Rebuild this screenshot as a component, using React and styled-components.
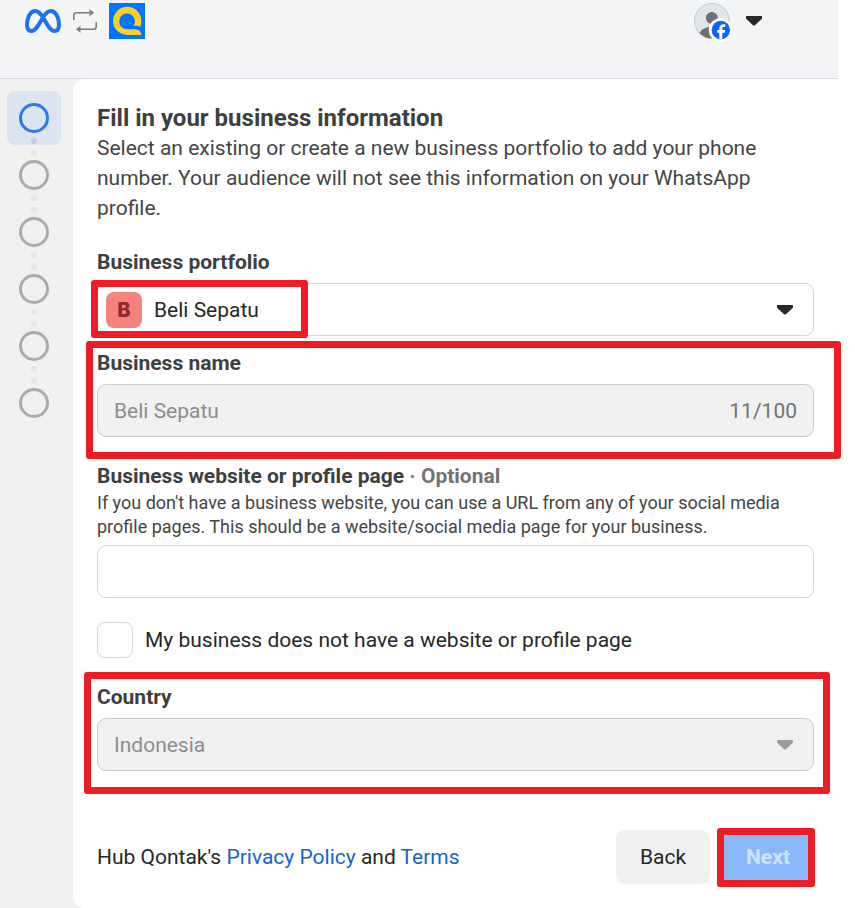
import React, { useState } from 'react';
import styled, { createGlobalStyle } from 'styled-components';

const GlobalStyle = createGlobalStyle`
  * {
    box-sizing: border-box;
  }

  body {
    margin: 0;
    background-color: #fff;
    color: #262728;
    font-family: Roboto, "Liberation Sans", sans-serif;
    font-size: 21px;
    line-height: 30px;
  }
`;

const Page = styled.div`
  display: flex;
  flex-direction: column;
  min-height: 100vh;
  padding-right: 17px;
`;

const Header = styled.header`
  display: flex;
  justify-content: space-between;
  align-items: flex-start;
  height: 79px;
  padding: 3px 76px 0 25px;
  background-color: #f4f5f7;
  border-bottom: 1px solid #d8dadf;
`;

const Brands = styled.div`
  display: flex;
  align-items: center;
  gap: 12px;

  svg {
    display: block;
  }
`;

const AccountButton = styled.button`
  display: flex;
  align-items: center;
  gap: 16px;
  padding: 0;
  border: none;
  background: none;
  cursor: pointer;

  svg {
    display: block;
    overflow: visible;
  }
`;

const Body = styled.div`
  display: flex;
  flex: 1;
  background-color: #f1f1f1;
`;

const Steps = styled.ol`
  width: 73px;
  margin: 0;
  padding: 24px 19px;
  list-style: none;
  isolation: isolate;
`;

const Step = styled.li`
  position: relative;
  display: flex;
  flex-direction: column;
  align-items: center;
  gap: 6px;
  height: ${({ $last }) => ($last ? '30px' : '57px')};
  width: 30px;

  &::before {
    content: "";
    display: ${({ $active }) => ($active ? 'block' : 'none')};
    position: absolute;
    z-index: -1;
    top: -12px;
    left: -12px;
    width: 54px;
    height: 54px;
    border-radius: 8px;
    background-color: #dbe4f0;
  }
`;

const Circle = styled.span`
  width: 30px;
  height: 30px;
  margin-bottom: -1px;
  border: 3px solid ${({ $active }) => ($active ? '#2d78ea' : '#a9adb3')};
  border-radius: 50%;
`;

const Dot = styled.span`
  width: 6px;
  height: 6px;
  border-radius: 50%;
  background-color: ${({ $active }) => ($active ? '#c3cbd6' : '#e5e5e5')};
`;

const Panel = styled.main`
  flex: 1;
  min-width: 0;
  padding: 24px;
  border-radius: 12px 0 0 12px;
  background-color: #fff;
`;

const Title = styled.h1`
  margin: 0;
  color: #3e3f40;
  font-size: 24px;
  font-weight: 700;
  line-height: 30px;
`;

const Intro = styled.p`
  margin: 0 0 24px;
  color: #444546;
`;

const Field = styled.div`
  position: relative;
  margin-bottom: ${({ $tight }) => ($tight ? '12px' : '24px')};
`;

const Label = styled.label`
  display: block;
  color: #3e3f40;
  font-weight: 700;
`;

const Optional = styled.span`
  color: #737373;
`;

const Help = styled.p`
  margin: 0;
  color: #444546;
  font-size: 18px;
  line-height: 24px;
`;

const Control = styled.div`
  position: relative;
  margin-top: 6px;
`;

const TextInput = styled.input`
  display: block;
  width: 100%;
  height: 53px;
  margin: 0;
  padding: 0 16px;
  border: 1px solid #d6d6d6;
  border-radius: 9px;
  background-color: #fff;
  color: #262728;
  font: inherit;
  opacity: 1;

  &:disabled {
    border-color: #cacaca;
    background-color: #f1f1f1;
    color: #8d8d8d;
  }
`;

const SelectInput = styled(TextInput)`
  appearance: none;
  padding-left: ${({ $withAvatar }) => ($withAvatar ? '56px' : '16px')};
`;

const Avatar = styled.span`
  position: absolute;
  top: 9px;
  left: 9px;
  width: 36px;
  height: 36px;
  border-radius: 8px;
  background-color: #f5827d;
  color: #8c2a34;
  font-family: Inter, Roboto, sans-serif;
  font-size: 20px;
  font-weight: 800;
  line-height: 36px;
  text-align: center;
  pointer-events: none;
`;

const Counter = styled.span`
  position: absolute;
  top: 12px;
  right: 17px;
  color: #737373;
`;

const CaretSlot = styled.span`
  position: absolute;
  top: 22px;
  right: 21px;
  pointer-events: none;

  svg {
    display: block;
  }
`;

const CheckRow = styled.div`
  display: flex;
  align-items: center;
  gap: 12px;
  margin-bottom: 24px;
`;

const Checkbox = styled.input`
  appearance: none;
  width: 36px;
  height: 36px;
  margin: 0;
  border: 1px solid #d6d6d6;
  border-radius: 8px;
  background-color: #fff;

  &:checked {
    background-color: #2d78ea;
  }
`;

const Footer = styled.footer`
  display: flex;
  justify-content: space-between;
  align-items: center;
  margin-top: 59px;
`;

const Link = styled.a`
  color: #1763cf;
  text-decoration: none;
`;

const Actions = styled.div`
  display: flex;
  gap: 12px;
`;

const ButtonWrap = styled.div`
  position: relative;
`;

const Button = styled.button`
  height: 54px;
  padding: 0 24px;
  border: none;
  border-radius: 9px;
  background-color: ${({ $primary }) => ($primary ? '#8ab9f9' : '#f1f1f1')};
  color: ${({ $primary }) => ($primary ? '#d0e3fd' : '#262728')};
  font: inherit;
  font-weight: ${({ $primary }) => ($primary ? 700 : 400)};
`;

// red annotation frame laid over a field or button
const Highlight = styled.span`
  position: absolute;
  z-index: 1;
  inset: ${({ $inset }) => $inset};
  border: 7px solid #ee1c25;
  border-radius: 3px;
  pointer-events: none;
`;

function Caret({ color = '#262728' }) {
  return (
    <svg width="16" height="10" viewBox="0 0 16 10" aria-hidden="true">
      <path d="M.4 0h15.2q.4 0 .4.5v1.7q0 .5-.4.9L9 9.200q-1 .8-2 0L.4 3.100Q0 2.700 0 2.200V.5Q0 0 .4 0z" fill={color} />
    </svg>
  );
}

function MetaLogo() {
  return (
    <svg width="36" height="24" viewBox="0 0 36 24" fill="none" aria-label="Meta">
      <path
        d="M10.300 2C5.200 2 2 9 2 15.400 2 19.500 3.700 22 6.700 22 11 22 14 15 18 8.500 20.500 4.500 22.600 2 25.700 2 30.800 2 34 9 34 15.400 34 19.500 32.300 22 29.300 22 25 22 22 15 18 8.500 15.500 4.500 13.400 2 10.300 2z"
        stroke="#1b74ee"
        strokeWidth="4"
        strokeLinejoin="round"
      />
    </svg>
  );
}

function SwapIcon() {
  return (
    <svg width="24" height="24" viewBox="0 0 24 24" fill="none" stroke="#7d7d7d" strokeWidth="1.6" strokeLinecap="round" aria-hidden="true">
      <path d="M.8 10.500V6.500Q.8 3.700 3.600 3.700H19" />
      <path d="M23.200 13.500v4q0 2.800-2.800 2.800H5" />
      <path d="M17 .9l3.800 2.800L17 6.500zM7 17.500l-3.800 2.800L7 23.100z" fill="#7d7d7d" strokeWidth=".6" />
    </svg>
  );
}

function QontakLogo() {
  return (
    <svg width="36" height="36" viewBox="0 0 36 36" aria-label="Qontak">
      <path fill="#0075ff" d="M0 0h36v36H0z" />
      <path
        fill="#fdce2c"
        d="M18.200 3.800a14.100 14.100 0 0 0 0 28.200h14q0-5.200-5.500-5.800-4 .2-8.500 0A7.900 7.900 0 1 1 26 18.200q0 2.400-1.500 4.600c3-.3 5 0 6.800 1.200q1-2.500 1-6A14.100 14.100 0 0 0 18.200 3.800z"
      />
    </svg>
  );
}

function ProfilePicture() {
  return (
    <svg width="36" height="36" viewBox="0 0 36 36" aria-hidden="true">
      <clipPath id="face">
        <circle cx="18" cy="18" r="17.500" />
      </clipPath>
      <circle cx="18" cy="18" r="17.500" fill="#e2e5ea" stroke="#c9ccd1" />
      <g clipPath="url(#face)" fill="#6d7075">
        <circle cx="17.800" cy="15" r="6" />
        <ellipse cx="18" cy="32.500" rx="13" ry="9" />
      </g>
      <circle cx="26.800" cy="27" r="12" fill="#fff" />
      <circle cx="26.800" cy="27" r="9.200" fill="#0866ff" />
      <path fill="#fff" d="M25.300 36v-6.200h-2V27h2v-1.200c0-3.100 1.400-4.600 4.500-4.600.6 0 1.100.1 1.500.2v2.600h-1.200c-1.400 0-1.800.5-1.800 1.900V27h2.900l-.5 2.800h-2.400V36z" />
    </svg>
  );
}

const steps = [1, 2, 3, 4, 5, 6];

function App() {
  const [website, setWebsite] = useState('');
  const [noWebsite, setNoWebsite] = useState(false);

  return (
    <>
      <GlobalStyle />
      <Page>
        <Header>
          <Brands>
            <MetaLogo />
            <SwapIcon />
            <QontakLogo />
          </Brands>
          <AccountButton type="button" aria-label="Account">
            <ProfilePicture />
            <Caret />
          </AccountButton>
        </Header>
        <Body>
          <Steps>
            {steps.map((step, i) => (
              <Step key={step} $active={i === 0} $last={i === steps.length - 1}>
                <Circle $active={i === 0} />
                {i < steps.length - 1 && (
                  <>
                    <Dot $active={i === 0} />
                    <Dot />
                  </>
                )}
              </Step>
            ))}
          </Steps>
          <Panel>
            <Title>Fill in your business information</Title>
            <Intro>
              Select an existing or create a new business portfolio to add your phone number. Your
              audience will not see this information on your WhatsApp profile.
            </Intro>

            <Field $tight>
              <Label htmlFor="portfolio">Business portfolio</Label>
              <Control>
                <SelectInput as="select" id="portfolio" $withAvatar>
                  <option>Beli Sepatu</option>
                </SelectInput>
                <Avatar>B</Avatar>
                <CaretSlot>
                  <Caret />
                </CaretSlot>
                <Highlight $inset="-3px calc(100% - 211px) -2px -6px" />
              </Control>
            </Field>

            <Field>
              <Label htmlFor="name">Business name</Label>
              <Control>
                <TextInput id="name" value="Beli Sepatu" disabled readOnly />
                <Counter>11/100</Counter>
              </Control>
              <Highlight $inset="-7px -27px -22px -11px" />
            </Field>

            <Field>
              <Label htmlFor="website">
                Business website or profile page <Optional>· Optional</Optional>
              </Label>
              <Help>
                If you don't have a business website, you can use a URL from any of your social media
                profile pages. This should be a website/social media page for your business.
              </Help>
              <Control>
                <TextInput id="website" value={website} onChange={(e) => setWebsite(e.target.value)} />
              </Control>
            </Field>

            <CheckRow>
              <Checkbox
                type="checkbox"
                id="no-website"
                checked={noWebsite}
                onChange={() => setNoWebsite(!noWebsite)}
              />
              <label htmlFor="no-website">My business does not have a website or profile page</label>
            </CheckRow>

            <Field>
              <Label htmlFor="country">Country</Label>
              <Control>
                <SelectInput as="select" id="country" disabled>
                  <option>Indonesia</option>
                </SelectInput>
                <CaretSlot>
                  <Caret color="#9d9d9d" />
                </CaretSlot>
              </Control>
              <Highlight $inset="-10px -16px -23px -13px" />
            </Field>

            <Footer>
              <div>
                Hub Qontak's <Link href="#privacy">Privacy Policy</Link> and{' '}
                <Link href="#terms">Terms</Link>
              </div>
              <Actions>
                <Button type="button">Back</Button>
                <ButtonWrap>
                  <Button type="button" $primary disabled>
                    Next
                  </Button>
                  <Highlight $inset="-2px -1px -3px -5px" />
                </ButtonWrap>
              </Actions>
            </Footer>
          </Panel>
        </Body>
      </Page>
    </>
  );
}

export default App;
